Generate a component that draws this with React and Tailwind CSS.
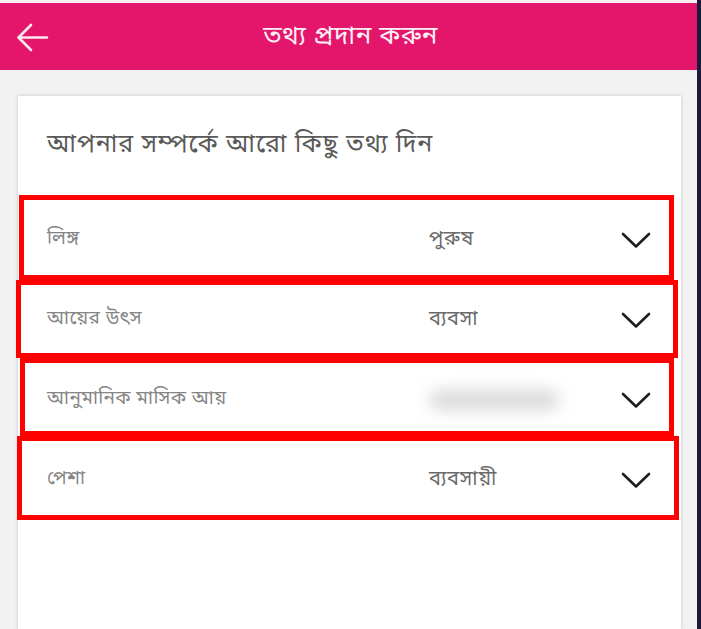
import React from "react";

const bn = { fontFamily: '"Noto Sans Bengali", "Noto Sans", "Lohit Bengali", "Noto Sans CJK SC", sans-serif' };

function Chevron() {
  return (
    <svg width="30" height="17" viewBox="0 0 30 17" fill="none">
      <path d="M2 2 L15 14.5 L28 2" stroke="#1f1f1f" strokeWidth="2.6" strokeLinecap="round" strokeLinejoin="round" />
    </svg>
  );
}

const rows = [
  { label: "লিঙ্গ", value: "পুরুষ" },
  { label: "আয়ের উৎস", value: "ব্যবসা" },
  { label: "আনুমানিক মাসিক আয়", value: null },
  { label: "পেশা", value: "ব্যবসায়ী" },
];

const boxes = [
  "left-[1px] top-[-5px] w-[655px] h-[85px]",
  "left-[-2px] top-[80px] w-[662px] h-[78px]",
  "left-[2px] top-[158px] w-[654px] h-[78px]",
  "left-[-1px] top-[236px] w-[662px] h-[84px]",
];

export default function App() {
  return (
    <div className="w-[701px] h-[629px] flex bg-[#f2f2f2] overflow-hidden" style={bn}>
      <div className="flex-1 flex flex-col">
        <div className="h-[3px] bg-[#fbeef3]" />
        <header className="h-[67px] bg-[#e3166b] flex items-center relative">
          <div className="pl-[16px] pt-[2px]">
            <svg width="33" height="29" viewBox="0 0 33 29" fill="none">
              <path d="M31 14.5 H3 M15 2 L2.5 14.5 L15 27" stroke="#fde8f0" strokeWidth="2.6" strokeLinecap="round" strokeLinejoin="round" />
            </svg>
          </div>
          <h1 className="absolute left-0 right-0 text-center text-[#fdf0f5] text-[26px] tracking-[0.5px] leading-[30px] pl-[4px] pt-[2px]">
            তথ্য প্রদান করুন
          </h1>
        </header>
        <main className="flex-1 pl-[18px] pr-[16px] pt-[26px]">
          <div className="bg-white h-full shadow-[0_0_4px_rgba(0,0,0,0.18)]">
            <h2 className="pl-[29px] pt-[34px] text-[25px] tracking-[0.9px] leading-[32px] text-[#5a5a5a]">
              আপনার সম্পর্কে আরো কিছু তথ্য দিন
            </h2>
            <div className="relative mt-[38px]">
              {rows.map((r, i) => (
                <div key={i} className="h-[80px] flex items-center pl-[29px]">
                  <div className="w-[381px] text-[19px] tracking-[0.4px] text-[#858585]">{r.label}</div>
                  <div className="w-[193px] text-[20px] tracking-[0.8px] text-[#6a6a6a] pl-[1px]">
                    {r.value ? (
                      r.value
                    ) : (
                      <div className="w-[130px] h-[20px] rounded-full bg-[#d9d9d9] blur-[8px]" />
                    )}
                  </div>
                  <Chevron />
                </div>
              ))}
              {boxes.map((b, i) => (
                <div key={i} className={`absolute border-[5px] border-[#ff0000] ${b}`} />
              ))}
            </div>
          </div>
        </main>
      </div>
      <div className="w-[4px] bg-[#1c1a3c]" />
    </div>
  );
}
